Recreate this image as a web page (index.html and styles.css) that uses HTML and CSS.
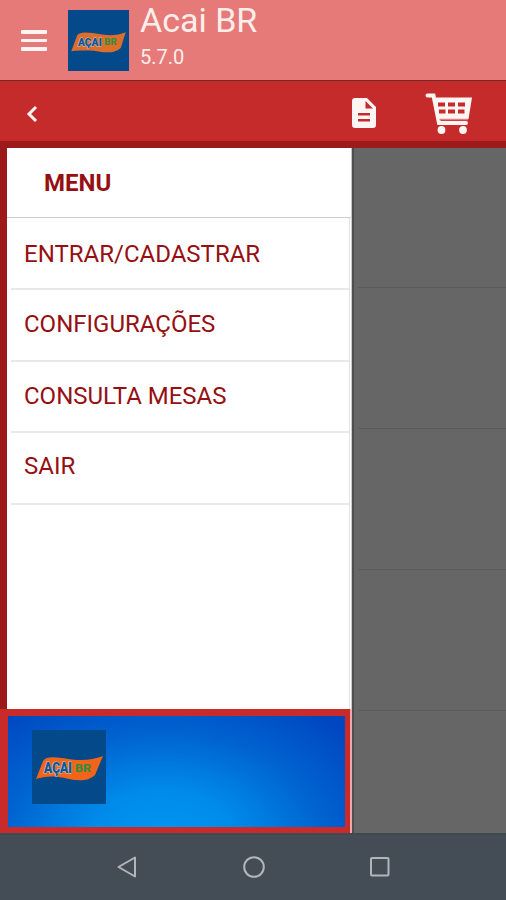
FILE: index.html
```html
<!DOCTYPE html>
<html lang="pt-BR">
<head>
    <meta charset="UTF-8">
    <meta name="viewport" content="width=device-width, initial-scale=1.0">
    <title>Acai BR</title>
    <link rel="stylesheet" href="styles.css">
</head>
<body>
    <header class="header">
        <div class="hamburger">
            <span></span>
            <span></span>
            <span></span>
        </div>
        <svg class="logo logo-header" viewBox="0 0 74 74">
            <path class="logo-flag" d="M4 50 L11 31 C14 26 22 27 30 28 C46 31 58 32 70 27 L64 46 C52 56 38 49 26 49 C18 49 11 49 4 50 Z"/>
            <text class="logo-name" x="12" y="44" textLength="29" lengthAdjust="spacingAndGlyphs">AÇAI</text>
            <text class="logo-sub" x="44" y="43" textLength="15" lengthAdjust="spacingAndGlyphs">BR</text>
        </svg>
        <div class="app-info">
            <h1 class="app-name">Acai BR</h1>
            <p class="app-version">5.7.0</p>
        </div>
    </header>

    <nav class="toolbar">
        <svg class="icon-back" width="14" height="20" viewBox="0 0 14 20">
            <path d="M11 3 L4 10 L11 17"/>
        </svg>
        <svg class="icon-doc" width="24" height="30" viewBox="0 0 24 30">
            <path fill-rule="evenodd" d="M3 0 H15 L24 9 V27 Q24 30 21 30 H3 Q0 30 0 27 V3 Q0 0 3 0 Z M13.5 3 V10.5 H21 Z M6 15 V17.5 H18 V15 Z M6 21 V23.5 H18 V21 Z"/>
        </svg>
        <svg class="icon-cart" width="48" height="42" viewBox="0 0 48 42">
            <path class="cart-frame" d="M2.5 3.5 H8.5 L14 31 H41"/>
            <path fill-rule="evenodd" d="M9 5.5 H47 L43.5 27 H13 Z M13 10.5 V14.5 H20 V10.5 Z M23 10.5 V14.5 H30 V10.5 Z M33 10.5 V14.5 H40 V10.5 Z M14 17.5 V21.5 H20.5 V17.5 Z M23 17.5 V21.5 H30 V17.5 Z M33 17.5 V21.5 H39.5 V17.5 Z"/>
            <path class="cart-bar" d="M14.5 27.5 H43"/>
            <circle cx="16.5" cy="38" r="3.9"/>
            <circle cx="38" cy="38" r="3.9"/>
        </svg>
    </nav>

    <main class="content">
        <aside class="sidebar">
            <div class="menu">
                <h2 class="menu-title">MENU</h2>
                <ul class="menu-list">
                    <li class="menu-item">ENTRAR/CADASTRAR</li>
                    <li class="menu-item">CONFIGURAÇÕES</li>
                    <li class="menu-item">CONSULTA MESAS</li>
                    <li class="menu-item">SAIR</li>
                </ul>
            </div>
            <div class="banner">
                <div class="banner-inner">
                    <svg class="logo logo-banner" viewBox="0 0 74 74">
                        <path class="logo-flag" d="M4 49 L11 31 C14 26 22 27 30 28 C46 31 58 31 71 26 L63 45 C52 55 38 48 26 47 C18 46 11 47 4 49 Z"/>
                        <text class="logo-name" x="12" y="43" textLength="28" lengthAdjust="spacingAndGlyphs">AÇAI</text>
                        <text class="logo-sub" x="43" y="42" textLength="16" lengthAdjust="spacingAndGlyphs">BR</text>
                    </svg>
                </div>
            </div>
        </aside>
        <div class="overlay">
            <div class="overlay-row"></div>
            <div class="overlay-row"></div>
            <div class="overlay-row"></div>
            <div class="overlay-row"></div>
        </div>
    </main>

    <footer class="android-nav">
        <svg width="22" height="24" viewBox="0 0 22 24"><path d="M19 2.5 V21.5 L2.5 12 Z"/></svg>
        <svg width="24" height="24" viewBox="0 0 24 24"><circle cx="12" cy="12" r="9.8"/></svg>
        <svg width="22" height="24" viewBox="0 0 22 24"><rect x="2" y="3" width="17.5" height="17.5" rx="1"/></svg>
    </footer>
</body>
</html>
```

FILE: styles.css
```css
* {
    margin: 0;
    padding: 0;
    box-sizing: border-box;
    font-family: Roboto, Arial, sans-serif;
}

body {
    display: flex;
    flex-direction: column;
    height: 100vh;
    overflow: hidden;
    background-color: #444c55;
}

.header {
    display: flex;
    height: 81px;
    padding-left: 21px;
    background-color: #e57a79;
    border-bottom: 1px solid #6e2a2a;
    color: #fdeeea;
}

.hamburger {
    display: flex;
    flex-direction: column;
    gap: 5px;
    width: 26px;
    padding-top: 30px;
}

.hamburger span {
    height: 3.5px;
    background-color: #fff6f3;
    border-radius: 1px;
}

.logo {
    flex-shrink: 0;
    background-color: #04498a;
}

.logo-header {
    width: 61px;
    height: 61px;
    margin: 10px 11px 0 21px;
}

.logo-flag {
    fill: #f0651a;
}

.logo-header .logo-flag {
    fill: #dc6e2c;
}

.logo-name {
    fill: #125393;
    stroke: #b9c8d0;
    stroke-width: 1.2px;
    paint-order: stroke;
    font-size: 14px;
    font-weight: 900;
}

.logo-sub {
    fill: #3a8b3c;
    font-size: 10px;
    font-weight: 900;
}

.app-name {
    font-size: 34px;
    line-height: 40px;
    font-weight: 400;
}

.app-version {
    margin-top: 6px;
    font-size: 20px;
    line-height: 22px;
}

.toolbar {
    display: flex;
    align-items: flex-start;
    height: 67px;
    padding-left: 25px;
    background-color: #c62b2c;
    border-bottom: 7px solid #9d1a1c;
    fill: #fff5f2;
}

.icon-back {
    margin-top: 23px;
    fill: none;
    stroke: #fff5f2;
    stroke-width: 3px;
}

.icon-doc {
    margin: 17px 0 0 313px;
}

.icon-cart {
    margin: 11px 0 0 49px;
}

.cart-frame,
.cart-bar {
    fill: none;
    stroke: #fff5f2;
    stroke-width: 4px;
    stroke-linecap: round;
}

.cart-bar {
    stroke: #dc8080;
    stroke-width: 1.5px;
    stroke-linecap: butt;
}

.content {
    display: flex;
    height: 685px;
    background-color: #666;
}

.sidebar {
    width: 352px;
}

.menu {
    height: 561px;
    background-color: #fff;
    border-left: 7px solid #9d1a1c;
    border-right: 1px solid #c9c9c9;
    color: #960f13;
}

.menu-title {
    height: 70px;
    padding-left: 37px;
    border-bottom: 1px solid #ccc;
    font-size: 24px;
    line-height: 71px;
    font-weight: 700;
}

.menu-list {
    height: 491px;
    margin-left: 4px;
    margin-right: 1px;
    border-right: 1px solid #e2e2e2;
    list-style: none;
}

.menu-item {
    height: 71.75px;
    padding-left: 13px;
    border-bottom: 2px solid #e8e8e8;
    font-size: 24px;
    line-height: 72px;
}

.menu-item:nth-child(2),
.menu-item:nth-child(3) {
    line-height: 69px;
}

.menu-item:nth-child(4) {
    line-height: 66px;
}

.banner {
    height: 124px;
    padding: 7px 5px 6px 8px;
    background-color: #c92b2b;
    border-right: 2px solid #eba9a9;
}

.banner-inner {
    height: 111px;
    padding: 14px 24px;
    background: radial-gradient(ellipse 245px 165px at 46% 112%, #0096f2 0%, #008be9 30%, #0063d0 65%, #0046c0 100%);
}

.logo-banner {
    display: block;
    width: 74px;
    height: 74px;
}

.overlay {
    flex: 1;
    padding-left: 4px;
    border-left: 2px solid #4e4e4e;
}

.overlay-row {
    height: 141px;
    border-bottom: 1px solid #5b5b5b;
}

.overlay-row:first-child {
    height: 140px;
}

.android-nav {
    display: flex;
    justify-content: space-between;
    flex: 1;
    padding: 20px 115px 0 116px;
    border-top: 2px solid #404850;
    background-color: #444c55;
}

.android-nav svg {
    fill: none;
    stroke: #b1b6b9;
    stroke-width: 2px;
    stroke-linejoin: round;
}
```
